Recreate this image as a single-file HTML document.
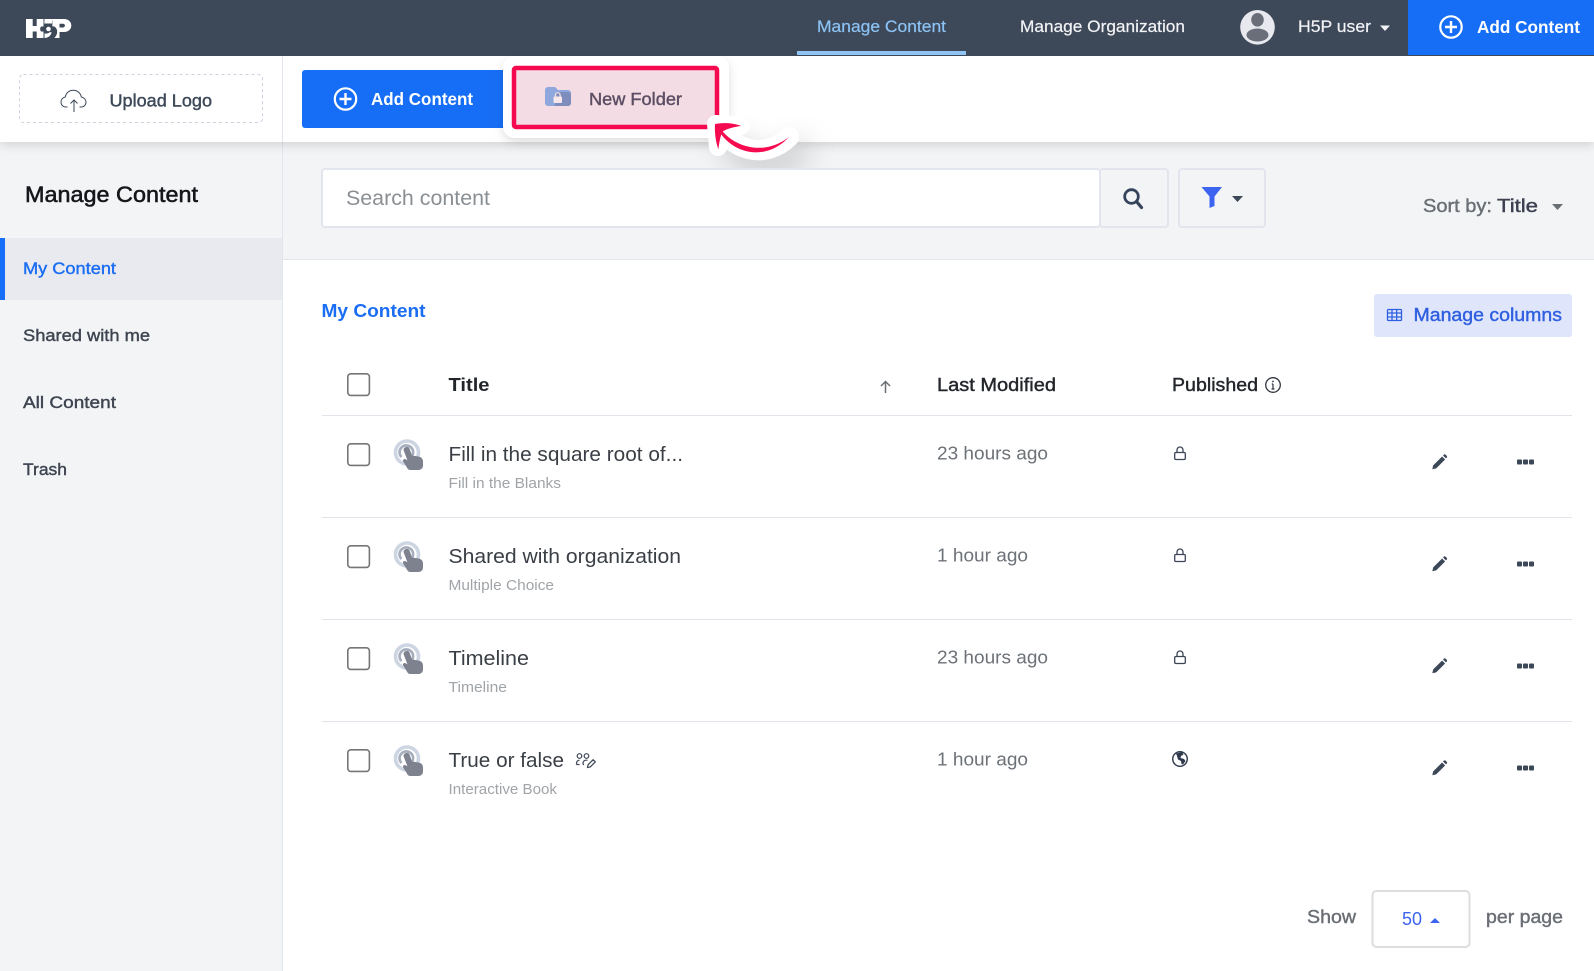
<!DOCTYPE html>
<html lang="en">
<head>
<meta charset="utf-8">
<title>Manage Content</title>
<style>
html,body{margin:0;padding:0;background:#fff}
#p{position:relative;width:1594px;height:971px;overflow:hidden;background:#fff;font-family:"Liberation Sans",sans-serif}
#p>div{position:absolute;box-sizing:border-box}
#side{left:0;top:142px;width:283px;height:829px;background:#f3f4f6;border-right:1px solid #e3e5ee}
#filter{left:283px;top:142px;width:1311px;height:118px;background:#f3f4f6;border-bottom:1px solid #e3e5ee}
#tool{left:0;top:56px;width:1594px;height:86px;background:#fff;box-shadow:0 3px 10px rgba(0,0,0,.14)}
#vline{left:282px;top:56px;width:1px;height:86px;background:#e3e5ee}
#head{left:0;top:0;width:1594px;height:56px;background:#3d4859}
svg{position:absolute;left:0;top:0}
text{font-family:"Liberation Sans",sans-serif;white-space:pre}
.s{stroke-width:.4px}
</style>
</head>
<body>
<div id="p">
<div id="side"></div>
<div id="filter"></div>
<div id="tool"></div>
<div id="vline"></div>
<div id="head"></div>
<svg width="1594" height="971" viewBox="0 0 1594 971" xmlns="http://www.w3.org/2000/svg">
<defs>
<filter id="sh1" x="-30%" y="-30%" width="170%" height="170%"><feDropShadow dx="0" dy="4" stdDeviation="5" flood-color="#000" flood-opacity=".13"/></filter>
<filter id="sh2" x="-60%" y="-60%" width="260%" height="260%"><feDropShadow dx="10" dy="14" stdDeviation="14" flood-color="#000" flood-opacity=".2"/></filter>
<g id="touch">
<circle cx="407" cy="452.500" r="11.500" fill="none" stroke="#cdd5e2" stroke-width="3.600"/>
<path d="M401.500 457a6.800 6.800 0 1110.500-1" fill="none" stroke="#a6aebd" stroke-width="2.600"/>
<path d="M403.500 450a3.200 3.200 0 016.200-1l2.300 6.500 6.500 1c2.700.4 4.500 2.300 4.500 5v4c0 2.700-2 4.500-4.500 4.500h-8c-1.600 0-2.600-.7-3.300-2l-4-6.500c-.9-1.500.9-3.200 2.400-2.300l1.800 1z" fill="#7d828e"/>
</g>
<g id="lock" fill="none" stroke="#3c4455" stroke-width="1.300">
<rect x="1174.700" y="452.500" width="10.600" height="7" rx="1.200"/>
<path d="M1177 452.500v-2.500a3 3 0 016 0v2.500"/>
</g>
<g id="pencil" fill="#3c4858">
<path d="M1432.300 469.300l.9-3.900 8.900-8.900 3 3-8.900 8.900z"/>
<path d="M1443 455.500l.8-.8a1.300 1.300 0 011.800 0l1.100 1.100a1.300 1.300 0 010 1.800l-.8.800z"/>
</g>
<g id="dots" fill="#3c4858">
<rect x="1517" y="459.500" width="5" height="5" rx="1"/>
<rect x="1523" y="459.500" width="5" height="5" rx="1"/>
<rect x="1529" y="459.500" width="5" height="5" rx="1"/>
</g>
</defs>

<!-- header -->
<g fill="#fff">
<path d="M26 19h6.700v7h4v-7H43.500v7.500h-2.500a4.500 4.500 0 000 5h2.500V38H36.700v-6.500h-4V38H26z"/>
<circle cx="48.500" cy="29" r="2.300"/>
<path d="M44.500 19h8l-.6 4.500h-7.600z"/>
<path d="M44.500 33.500c2.300.2 4.700-.2 5.200-1.500l2 .5C50.500 36 48 38 44.500 38z"/>
<path d="M52.500 19H64c4.500 0 7.300 2.800 7.300 6.500s-2.800 6.500-7.300 6.500h-4.500v6h-5.200c1.800-1.600 2.700-3.600 2.900-5.700.2-2.600-1-4.700-2.900-5.800l-2-.2z"/>
</g>
<path d="M59.500 23.800v3.700h3.500c1.100 0 1.900-.8 1.900-1.850S64.100 23.800 63 23.800z" fill="#3d4859"/>

<text class="s" x="817" y="32" font-size="17" fill="#8cc3f4" stroke="#8cc3f4" style="stroke-width:.2px" textLength="129" lengthAdjust="spacingAndGlyphs">Manage Content</text>
<rect x="797" y="51" width="169" height="4" fill="#8fc4f5"/>
<text class="s" x="1020" y="32" font-size="17" fill="#f2f3f5" stroke="#f2f3f5" style="stroke-width:.2px" textLength="165" lengthAdjust="spacingAndGlyphs">Manage Organization</text>
<circle cx="1257.500" cy="27.300" r="17.300" fill="#e8e9ef"/>
<ellipse cx="1257.500" cy="19.800" rx="6.300" ry="6.800" fill="#6a6e79"/>
<ellipse cx="1257.500" cy="35" rx="11" ry="6.500" fill="#6a6e79"/>
<text class="s" x="1298" y="32" font-size="17" fill="#f2f3f5" stroke="#f2f3f5" style="stroke-width:.2px" textLength="73" lengthAdjust="spacingAndGlyphs">H5P user</text>
<path d="M1380 25.500h10l-5 5.500z" fill="#f2f3f5"/>
<rect x="1408" y="0" width="186" height="55" fill="#176ef6"/>
<circle cx="1451" cy="27" r="10.700" fill="none" stroke="#fff" stroke-width="2.200"/>
<path d="M1451 21v12M1445 27h12" stroke="#fff" stroke-width="2.400"/>
<text x="1477" y="33" font-size="17.500" font-weight="700" fill="#fff" textLength="103" lengthAdjust="spacingAndGlyphs">Add Content</text>

<!-- toolbar -->
<rect x="19.500" y="74.500" width="243" height="48" rx="4" fill="#fff" stroke="#cfd0e0" stroke-dasharray="3 3"/>
<path d="M67.500 107h-1.500c-3 0-5-2.200-5-5 0-2.600 1.800-4.600 4.300-5 .6-4 3.900-6.800 8-6.800 4 0 7.300 2.800 8 6.800 2.500.4 4.700 2.400 4.700 5 0 2.800-2 5-5 5h-1.500" fill="none" stroke="#3c4858" stroke-width="1"/>
<path d="M74 112v-12M70.500 103.500L74 100l3.500 3.500" fill="none" stroke="#3c4858" stroke-width="1"/>
<text class="s" x="109.500" y="106.500" font-size="17.500" fill="#3c4858" stroke="#3c4858" textLength="102.500" lengthAdjust="spacingAndGlyphs">Upload Logo</text>

<rect x="302" y="70" width="204" height="58" rx="3" fill="#176ef6"/>
<circle cx="345.500" cy="99" r="10.700" fill="none" stroke="#fff" stroke-width="2.200"/>
<path d="M345.500 93v12M339.500 99h12" stroke="#fff" stroke-width="2.400"/>
<text x="371" y="105" font-size="17.500" font-weight="700" fill="#fff" textLength="102" lengthAdjust="spacingAndGlyphs">Add Content</text>

<g filter="url(#sh2)">
<path d="M720 129 C735 150 765 160 789 137" fill="none" stroke="#fff" stroke-width="20" stroke-linecap="round" stroke-linejoin="round"/>
</g>
<rect x="503" y="56" width="226" height="82" rx="12" fill="#fff" filter="url(#sh1)"/>
<rect x="514" y="68" width="203" height="59" rx="2" fill="#f3dce3" stroke="#f5094f" stroke-width="4.500"/>
<path d="M720 129 C735 150 765 160 789 137 M716 124 L741 126 M716 124 L718 147" fill="none" stroke="#fff" stroke-width="18" stroke-linecap="round" stroke-linejoin="round"/>
<path d="M720 128C734 148 765 156 789 137 766 162 733 154 719 131Z" fill="#f5094f"/>
<path d="M715 124C724 122.500 734 123 741 126 733 127 726 129 722 132 720 138 719 144 718.300 149.300 715.500 141 714.500 132 715 124Z" fill="#f5094f"/>
<path d="M545 90a3 3 0 013-3h7l3 3h10a3 3 0 013 3v10a3 3 0 01-3 3h-20a3 3 0 01-3-3z" fill="#8ea7dc"/>
<path d="M556 92h12a3 3 0 013 3v8a3 3 0 01-3 3h-14c2-2 2-12 2-14z" fill="#7e8dbb"/>
<rect x="553.500" y="96.500" width="8.500" height="6.500" rx="1" fill="#f7e6ea"/>
<path d="M555.500 96.500v-1.500a2.300 2.300 0 014.600 0v1.500" fill="none" stroke="#f7e6ea" stroke-width="1.200"/>
<text class="s" x="589" y="105" font-size="17.500" fill="#5a4d63" stroke="#5a4d63" textLength="93" lengthAdjust="spacingAndGlyphs">New Folder</text>

<!-- sidebar -->
<text class="s" x="25" y="202" font-size="22" fill="#14161a" stroke="#14161a" style="stroke-width:.55px" textLength="173" lengthAdjust="spacingAndGlyphs">Manage Content</text>
<rect x="0" y="238" width="282" height="62" fill="#e9eaf0"/>
<rect x="0" y="238" width="5" height="62" fill="#176ef6"/>
<text class="s" x="23" y="274" font-size="17" fill="#1b6ef3" stroke="#1b6ef3" textLength="93" lengthAdjust="spacingAndGlyphs">My Content</text>
<text class="s" x="23" y="341" font-size="17" fill="#3d4450" stroke="#3d4450" textLength="127" lengthAdjust="spacingAndGlyphs">Shared with me</text>
<text class="s" x="23" y="408" font-size="17" fill="#3d4450" stroke="#3d4450" textLength="93" lengthAdjust="spacingAndGlyphs">All Content</text>
<text class="s" x="23" y="475" font-size="17" fill="#3d4450" stroke="#3d4450" textLength="44" lengthAdjust="spacingAndGlyphs">Trash</text>

<!-- search -->
<rect x="322" y="169" width="778" height="58" rx="3" fill="#fff" stroke="#e3e5ee" stroke-width="2"/>
<text x="346" y="205" font-size="21" fill="#8a8f94" textLength="144" lengthAdjust="spacingAndGlyphs">Search content</text>
<rect x="1100" y="169" width="68" height="58" rx="3" fill="#f3f4f6" stroke="#e3e5ee" stroke-width="2"/>
<circle cx="1131.500" cy="196.500" r="6.800" fill="none" stroke="#35445a" stroke-width="2.800"/>
<path d="M1136.500 201.500l5 6" stroke="#35445a" stroke-width="3.200" stroke-linecap="round"/>
<rect x="1179" y="169" width="86" height="58" rx="3" fill="#f3f4f6" stroke="#e3e5ee" stroke-width="2"/>
<path d="M1201.500 187h20.500l-7.500 9.500v9.500l-5 2v-11.500z" fill="#3d64f0"/>
<path d="M1232 196h11l-5.500 6z" fill="#3c4858"/>
<text class="s" x="1423" y="212" font-size="18.500" fill="#6a6f75" stroke="#6a6f75" textLength="69" lengthAdjust="spacingAndGlyphs">Sort by:</text>
<text class="s" x="1497" y="212" font-size="18.500" fill="#3c4050" stroke="#3c4050" textLength="41" lengthAdjust="spacingAndGlyphs">Title</text>
<path d="M1552 204h11l-5.500 6z" fill="#6a6f75"/>

<!-- content head -->
<text x="321.500" y="317" font-size="18.500" font-weight="700" fill="#1b6ef3" textLength="104" lengthAdjust="spacingAndGlyphs">My Content</text>
<rect x="1374" y="294" width="198" height="43" rx="3" fill="#dfe6fb"/>
<g fill="none" stroke="#2f5fe0" stroke-width="1.300">
<rect x="1387.500" y="309.500" width="14" height="11" rx="1"/>
<path d="M1387.500 313h14M1387.500 317h14M1392 309.500v11M1396.700 309.500v11"/>
</g>
<text class="s" x="1413.500" y="321" font-size="18.500" fill="#2f5fe0" stroke="#2f5fe0" textLength="148.500" lengthAdjust="spacingAndGlyphs">Manage columns</text>

<rect x="347.800" y="373.800" width="21.600" height="21.600" rx="3" fill="#fff" stroke="#767676" stroke-width="1.600"/>
<text x="448.500" y="391" font-size="18" font-weight="700" fill="#22252a" textLength="41" lengthAdjust="spacingAndGlyphs">Title</text>
<path d="M885.500 393v-11.500M881 386l4.500-4.500 4.500 4.500" fill="none" stroke="#6a6f75" stroke-width="1.500"/>
<text class="s" x="937" y="391" font-size="18" fill="#22252a" stroke="#22252a" textLength="119" lengthAdjust="spacingAndGlyphs">Last Modified</text>
<text class="s" x="1172" y="391" font-size="18" fill="#22252a" stroke="#22252a" textLength="86" lengthAdjust="spacingAndGlyphs">Published</text>
<circle cx="1273" cy="385" r="7.300" fill="none" stroke="#2f3540" stroke-width="1.300"/>
<path d="M1273 384v5M1271.500 389h3M1271.800 384h1.200" stroke="#2f3540" stroke-width="1.200" fill="none"/>
<circle cx="1273" cy="381.500" r=".9" fill="#2f3540"/>

<g stroke="#e3e3ec" stroke-width="1">
<path d="M322 415.500H1572M322 517.500H1572M322 619.500H1572M322 721.500H1572"/>
</g>

<!-- row 1 -->
<g>
<rect x="347.800" y="443.800" width="21.600" height="21.600" rx="3" fill="#fff" stroke="#767676" stroke-width="1.600"/>
<use href="#touch"/>
<text x="448.500" y="461" font-size="20.500" fill="#3a3f45" textLength="234.500" lengthAdjust="spacingAndGlyphs">Fill in the square root of...</text>
<text x="448.500" y="488" font-size="15" fill="#a0a4a8" textLength="112.500" lengthAdjust="spacingAndGlyphs">Fill in the Blanks</text>
<text x="937" y="459.500" font-size="18.500" fill="#6d7278" textLength="111" lengthAdjust="spacingAndGlyphs">23 hours ago</text>
<use href="#lock"/><use href="#pencil"/><use href="#dots"/>
</g>
<!-- row 2 -->
<g transform="translate(0 102)">
<rect x="347.800" y="443.800" width="21.600" height="21.600" rx="3" fill="#fff" stroke="#767676" stroke-width="1.600"/>
<use href="#touch"/>
<text x="448.500" y="461" font-size="20.500" fill="#3a3f45" textLength="232.500" lengthAdjust="spacingAndGlyphs">Shared with organization</text>
<text x="448.500" y="488" font-size="15" fill="#a0a4a8" textLength="105.500" lengthAdjust="spacingAndGlyphs">Multiple Choice</text>
<text x="937" y="459.500" font-size="18.500" fill="#6d7278" textLength="91" lengthAdjust="spacingAndGlyphs">1 hour ago</text>
<use href="#lock"/><use href="#pencil"/><use href="#dots"/>
</g>
<!-- row 3 -->
<g transform="translate(0 204)">
<rect x="347.800" y="443.800" width="21.600" height="21.600" rx="3" fill="#fff" stroke="#767676" stroke-width="1.600"/>
<use href="#touch"/>
<text x="448.500" y="461" font-size="20.500" fill="#3a3f45" textLength="80.500" lengthAdjust="spacingAndGlyphs">Timeline</text>
<text x="448.500" y="488" font-size="15" fill="#a0a4a8" textLength="58.500" lengthAdjust="spacingAndGlyphs">Timeline</text>
<text x="937" y="459.500" font-size="18.500" fill="#6d7278" textLength="111" lengthAdjust="spacingAndGlyphs">23 hours ago</text>
<use href="#lock"/><use href="#pencil"/><use href="#dots"/>
</g>
<!-- row 4 -->
<g transform="translate(0 306)">
<rect x="347.800" y="443.800" width="21.600" height="21.600" rx="3" fill="#fff" stroke="#767676" stroke-width="1.600"/>
<use href="#touch"/>
<text x="448.500" y="461" font-size="20.500" fill="#3a3f45" textLength="115.500" lengthAdjust="spacingAndGlyphs">True or false</text>
<text x="448.500" y="488" font-size="15" fill="#a0a4a8" textLength="108.500" lengthAdjust="spacingAndGlyphs">Interactive Book</text>
<text x="937" y="459.500" font-size="18.500" fill="#6d7278" textLength="91" lengthAdjust="spacingAndGlyphs">1 hour ago</text>
<g fill="none" stroke="#3c4455" stroke-width="1.200">
<circle cx="579.500" cy="450" r="2.300"/><circle cx="586.500" cy="450" r="2.300"/>
<path d="M576.500 458.500v-1.300a3 3 0 013-3M583 458.500v-1.300a3 3 0 013-3h1.500M576.500 458.500h3M583 458.500h1"/>
<path d="M587.500 461.500l.6-2.800 5-5 2.200 2.200-5 5z"/>
</g>
<circle cx="1180" cy="453" r="7.300" fill="none" stroke="#2f3a4c" stroke-width="1.400"/>
<path d="M1176 447.500l6-1.500 1.500 2.500-2.500 1.500-.5 2 3.500 1 1.500 2-2.500 3.500-1.500-.5-.5-3-3-1.500-1-3.500z" fill="#2f3a4c"/>
<use href="#pencil"/><use href="#dots"/>
</g>

<!-- footer -->
<text class="s" x="1307" y="923" font-size="18.500" fill="#6a6e75" stroke="#6a6e75" textLength="49" lengthAdjust="spacingAndGlyphs">Show</text>
<rect x="1372.500" y="891" width="97" height="56" rx="4" fill="#fff" stroke="#dddddd" stroke-width="2"/>
<text x="1402" y="925" font-size="18" fill="#3d64f0" textLength="20" lengthAdjust="spacingAndGlyphs">50</text>
<path d="M1430 923l5-5 5 5z" fill="#3d64f0"/>
<text class="s" x="1486" y="923" font-size="18.500" fill="#6a6e75" stroke="#6a6e75" textLength="77" lengthAdjust="spacingAndGlyphs">per page</text>
</svg>
</div>
</body>
</html>
